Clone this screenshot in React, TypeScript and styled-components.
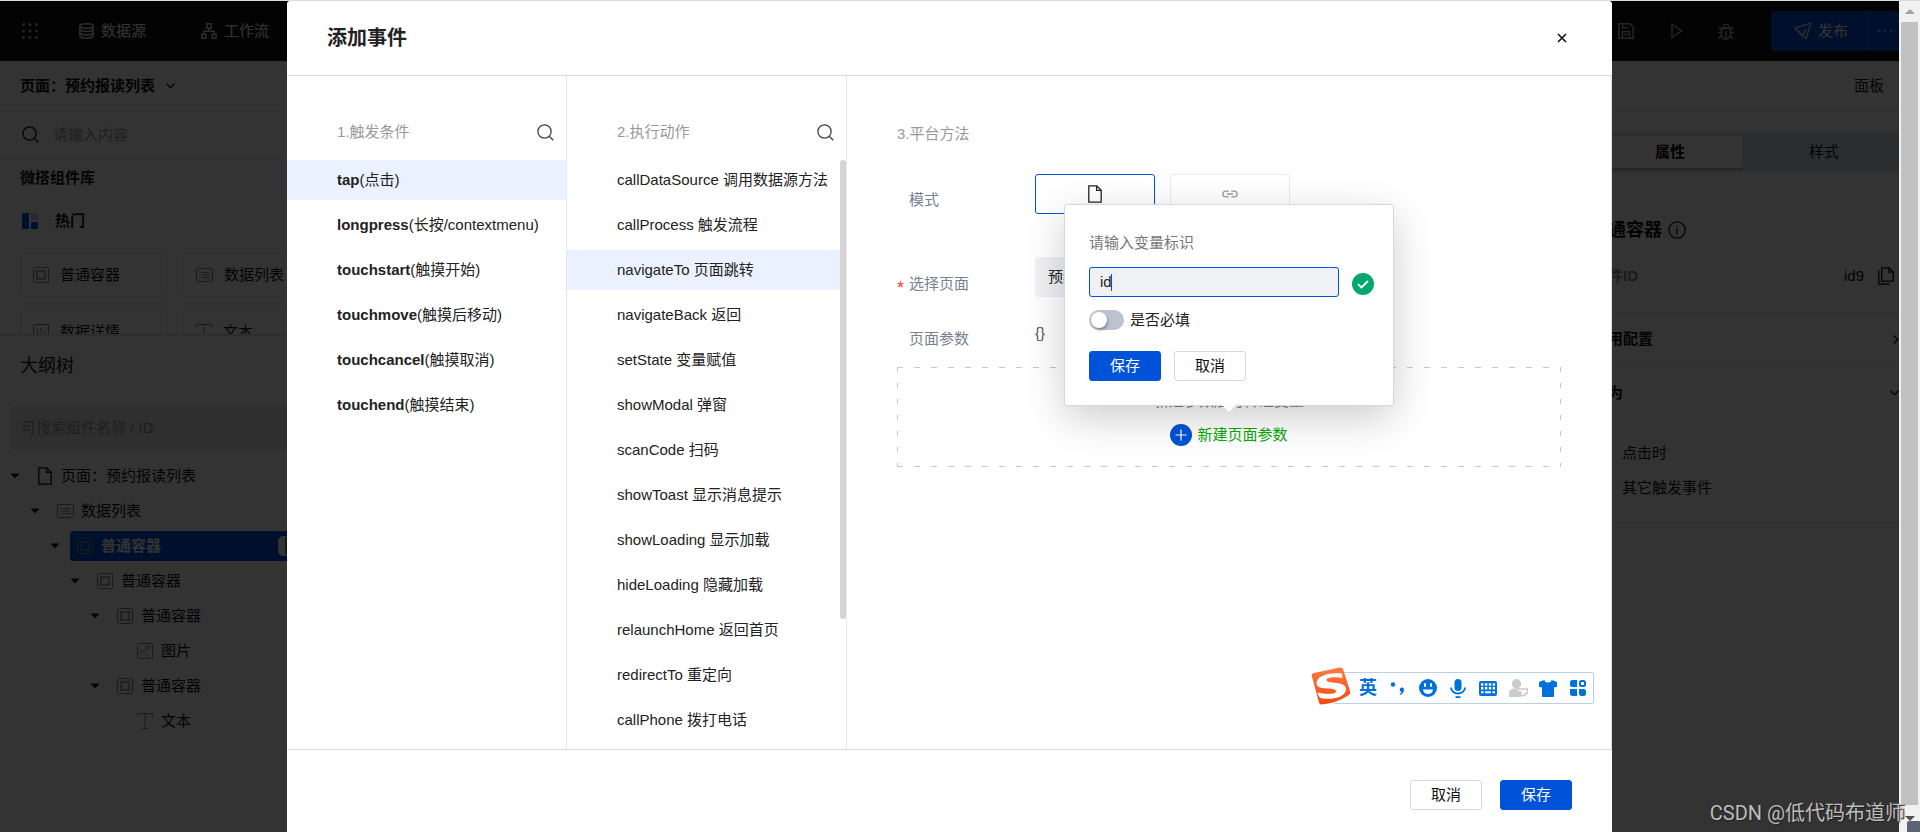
import React from 'react';
import styled, { createGlobalStyle, css } from 'styled-components';

const GlobalStyle = createGlobalStyle`
  *, *::before, *::after { box-sizing: border-box; }
  html, body { margin: 0; padding: 0; }
  body {
    font-family: "Liberation Sans", "Noto Sans CJK SC", sans-serif;
    font-size: 15px;
    line-height: 20px;
    color: #222;
    overflow: hidden;
  }
  button, input { font: inherit; color: inherit; }
  button { background: none; border: 0; padding: 0; cursor: pointer; }
  h1, h2, h3, p, ul { margin: 0; padding: 0; font-size: inherit; font-weight: inherit; }
  ul { list-style: none; }
  svg { display: block; flex: none; }
`;

/* ---------- frame ---------- */

const Screen = styled.div`
  position: relative;
  display: flex;
  height: 100vh;
  border-top: 1px solid #dcdcdc;
  overflow: hidden;
`;

const Viewport = styled.div`
  position: relative;
  flex: 1;
  min-width: 0;
  display: flex;
  flex-direction: column;
  background: #fff;
  overflow: hidden;
`;

const PageScroll = styled.div`
  width: 21px;
  flex: none;
  display: flex;
  flex-direction: column;
  align-items: center;
  background: #f1f1f1;
`;

const PageThumb = styled.div`
  width: 17px;
  flex: 1;
  background: #c1c1c1;
`;

const ScrollArrow = styled.div<{ $h: number }>`
  height: ${p => p.$h}px;
  width: 100%;
  display: flex;
  align-items: center;
  justify-content: center;
`;

/* ---------- editor behind the dialog ---------- */

const TopBar = styled.header`
  height: 60px;
  flex: none;
  display: flex;
  align-items: center;
  justify-content: space-between;
  padding-left: 22px;
  background: #111;
  color: #fff;
`;

const TopGroup = styled.nav`
  display: flex;
  align-items: center;
`;

const TopItem = styled.button<{ $gap?: number }>`
  display: flex;
  align-items: center;
  gap: 7px;
  margin-left: ${p => p.$gap ?? 0}px;
`;

const Publish = styled.div`
  display: flex;
  height: 40px;
  margin-left: 37px;
  background: #0052d9;
  border-radius: 4px 0 0 4px;
`;

const PublishMain = styled.button`
  width: 95px;
  display: flex;
  align-items: center;
  gap: 6px;
  padding-left: 23px;
`;

const PublishMore = styled.button`
  width: 33px;
  padding-left: 10px;
  border-left: 1px solid #2a6fe6;
`;

const Workspace = styled.div`
  flex: 1;
  min-height: 0;
  display: flex;
  justify-content: space-between;
`;

const LeftPanel = styled.aside`
  width: 340px;
  display: flex;
  flex-direction: column;
`;

const PageSelect = styled.button`
  height: 51px;
  flex: none;
  display: flex;
  align-items: center;
  gap: 11px;
  padding-left: 20px;
  font-weight: 700;
  color: #111;
  border-bottom: 1px solid #e8e8e8;
`;

const SearchRow = styled.label`
  height: 47px;
  flex: none;
  display: flex;
  align-items: center;
  gap: 14px;
  padding-left: 22px;
  border-bottom: 2px solid #e8e8e8;
`;

const PlainInput = styled.input`
  width: 200px;
  padding: 0;
  border: 0;
  outline: 0;
  background: transparent;
  &::placeholder { color: #999; opacity: 1; }
`;

const Library = styled.section`
  height: 177px;
  flex: none;
  padding: 9px 0 0 20px;
  overflow: hidden;
  border-bottom: 2px solid #e4e4e4;
`;

const GroupTitle = styled.h2`
  font-weight: 700;
  color: #111;
`;

const HotTitle = styled.h3`
  display: flex;
  align-items: center;
  gap: 17px;
  margin: 23px 0 21px;
  padding-left: 2px;
  font-weight: 700;
  color: #111;
`;

const CardGrid = styled.div`
  display: grid;
  grid-template-columns: 148px 148px;
  gap: 12px 15px;
`;

const Card = styled.button`
  height: 45px;
  display: flex;
  align-items: center;
  gap: 11px;
  padding-left: 12px;
  color: #111;
  border: 1px solid #e6e6e6;
  border-radius: 4px;
`;

const OutlineTitle = styled.h2`
  padding: 18px 20px 0;
  font-size: 18px;
  line-height: 24px;
  color: #111;
`;

const OutlineSearch = styled.label`
  height: 44px;
  flex: none;
  display: flex;
  align-items: center;
  margin: 28px 10px 11px;
  padding-left: 11px;
  border-radius: 4px;
  background: #eaeaea;
`;

const Tree = styled.ul`
  display: flex;
  flex-direction: column;
  gap: 5px;
`;

const TreeRow = styled.li<{ $level: number }>`
  height: 30px;
  display: flex;
  align-items: center;
  padding-left: ${p => 10 + p.$level * 20}px;
`;

const Toggle = styled.span`
  width: 20px;
  flex: none;
`;

const TreeIcon = styled.span`
  width: 16px;
  display: flex;
  justify-content: center;
`;

const TreeLabel = styled.div<{ $active?: boolean }>`
  flex: 1;
  height: 30px;
  display: flex;
  align-items: center;
  gap: 8px;
  padding-left: 7px;
  color: #111;
  ${p => p.$active && css`
    background: #0052d9;
    color: #fff;
    font-weight: 700;
    border-radius: 3px 0 0 3px;
  `}
`;

const Badge = styled.span`
  height: 20px;
  width: 40px;
  margin-left: auto;
  margin-right: 22px;
  border: 1px solid #fff;
  border-left-width: 7px;
  border-radius: 5px;
  background: #2ba471;
`;

const RightPanel = styled.aside`
  width: 326px;
  display: flex;
  flex-direction: column;
  color: #111;
`;

const BoardLink = styled.div`
  height: 51px;
  display: flex;
  align-items: center;
  justify-content: flex-end;
  padding-right: 15px;
  border-bottom: 1px solid #e0e0e0;
`;

const Tabs = styled.div`
  display: grid;
  grid-template-columns: 146px 1fr;
  gap: 6px;
  height: 40px;
  margin: 20px 0 0 20px;
  padding: 4px 0 4px 4px;
  background: #dde0e5;
  border-radius: 4px;
`;

const Tab = styled.button<{ $active?: boolean }>`
  border-radius: 3px;
  ${p => p.$active && css`
    background: #fff;
    color: #000;
    font-weight: 700;
    box-shadow: 0 1px 2px rgba(0, 0, 0, 0.3);
  `}
`;

const WidgetTitle = styled.h2`
  display: flex;
  align-items: center;
  gap: 6px;
  margin: 46px 0 24px 17px;
  font-size: 18px;
  line-height: 24px;
  font-weight: 700;
`;

const Field = styled.div`
  height: 47px;
  display: flex;
  align-items: flex-start;
  justify-content: space-between;
  padding: 0 5px 0 20px;
  border-bottom: 1px solid #e0e0e0;
`;

const FieldName = styled.span`
  font-weight: 700;
  color: #888;
`;

const FieldValue = styled.span`
  display: flex;
  align-items: center;
  gap: 14px;
`;

const Section = styled.button<{ $line?: boolean }>`
  height: 53px;
  display: flex;
  align-items: center;
  justify-content: space-between;
  padding-left: 20px;
  font-weight: 700;
  color: #111;
  border-bottom: ${p => (p.$line ? '1px solid #e0e0e0' : '0')};
`;

const EventList = styled.ul`
  display: flex;
  flex-direction: column;
  gap: 15px;
  padding: 24px 0 25px 49px;
  border-bottom: 1px solid #e0e0e0;
`;

/* ---------- dialog ---------- */

const Overlay = styled.div`
  position: absolute;
  inset: 0;
  display: flex;
  padding: 0 287px;
  background: rgba(0, 0, 0, 0.8);
`;

const Dialog = styled.section`
  flex: 1;
  min-width: 0;
  display: flex;
  flex-direction: column;
  background: #fff;
  border-radius: 3px 3px 0 0;
`;

const DialogHead = styled.header`
  height: 75px;
  flex: none;
  display: flex;
  align-items: center;
  justify-content: space-between;
  padding: 0 45px 0 40px;
  border-bottom: 1px solid #d9dce6;
`;

const DialogTitle = styled.h1`
  font-size: 20px;
  line-height: 28px;
  font-weight: 700;
`;

const DialogBody = styled.div`
  flex: 1;
  min-height: 0;
  display: flex;
  border-right: 1px solid #dcdfe8;
`;

const Column = styled.div`
  width: 280px;
  flex: none;
  display: flex;
  flex-direction: column;
  border-right: 1px solid #e3e6ee;
`;

const ColumnHead = styled.div`
  display: flex;
  align-items: center;
  justify-content: space-between;
  margin: 46px 12px 18px 50px;
  color: #999;
`;

const ColumnBody = styled.div`
  flex: 1;
  min-height: 0;
  display: flex;
`;

const OptionList = styled.ul`
  flex: 1;
  overflow: hidden;
`;

const ListThumb = styled.div`
  width: 6px;
  height: 78%;
  border-radius: 3px;
  background: #d4d4d4;
`;

const Option = styled.li<{ $active?: boolean }>`
  height: 40px;
  margin-bottom: 5px;
  padding: 10px 0 10px 50px;
  white-space: nowrap;
  background: ${p => (p.$active ? '#ebf2ff' : 'transparent')};
`;

const Detail = styled.div`
  flex: 1;
  min-width: 0;
  padding: 48px 50px 0;
`;

const DetailTitle = styled.h2`
  margin-bottom: 30px;
  color: #999;
`;

const FormRow = styled.div<{ $h: number; $label: number }>`
  height: ${p => p.$h}px;
  display: flex;
  align-items: flex-start;
  & > :first-child { padding-top: ${p => p.$label}px; }
`;

const Label = styled.span`
  width: 138px;
  flex: none;
  display: flex;
  color: #79808f;
`;

const Star = styled.span`
  width: 12px;
  height: 20px;
  font-size: 18px;
  line-height: 28px;
  color: #f53f3f;
`;

const ModeGroup = styled.div`
  display: flex;
  gap: 15px;
`;

const ModeButton = styled.button<{ $active?: boolean }>`
  width: 120px;
  height: 40px;
  display: flex;
  align-items: center;
  justify-content: center;
  color: ${p => (p.$active ? '#222' : '#999')};
  border: 1px solid ${p => (p.$active ? '#0052d9' : '#e9ebf0')};
  border-radius: 3px;
`;

const PageField = styled.button`
  width: 350px;
  height: 40px;
  padding-left: 13px;
  text-align: left;
  background: #f0f1f5;
  border-radius: 3px;
`;

const ParamValue = styled.span`
  color: #555;
`;

const ParamBox = styled.div`
  height: 100px;
  display: flex;
  flex-direction: column;
  align-items: center;
  padding-top: 24px;
  color: #79808f;
  background:
    repeating-linear-gradient(90deg, #c8c8c8 0 6px, transparent 6px 17px) top / 100% 1px no-repeat,
    repeating-linear-gradient(90deg, #c8c8c8 0 6px, transparent 6px 17px) bottom / 100% 1px no-repeat,
    repeating-linear-gradient(180deg, #c8c8c8 0 5px, transparent 5px 16px) left / 1px 100% no-repeat,
    repeating-linear-gradient(180deg, #c8c8c8 0 5px, transparent 5px 16px) right / 1px 100% no-repeat;
`;

const ParamAnchor = styled.div`
  position: relative;
  margin-top: 13px;
`;

const AddParam = styled.button`
  display: flex;
  align-items: center;
  gap: 5px;
  color: #0aa80a;
`;

const Popover = styled.form`
  position: absolute;
  left: 50%;
  bottom: 40px;
  width: 330px;
  margin-left: -165px;
  padding: 28px 18px 24px 24px;
  color: #222;
  background: #fff;
  border: 1px solid #d5d8e2;
  border-radius: 3px;
  box-shadow: 0 12px 40px rgba(0, 0, 0, 0.2);
  &::after {
    content: "";
    position: absolute;
    left: 50%;
    top: 100%;
    margin-left: -7px;
    border: 7px solid transparent;
    border-bottom: 0;
    border-top-color: #fff;
  }
`;

const PopLabel = styled.label`
  display: block;
  color: #777;
`;

const InputRow = styled.div`
  display: flex;
  align-items: center;
  gap: 13px;
  margin: 14px 0 13px;
`;

const IdBox = styled.span`
  width: 250px;
  height: 30px;
  display: flex;
  align-items: center;
  padding-left: 10px;
  background: #f0f1f5;
  border: 1px solid #0052d9;
  border-radius: 3px;
`;

const IdInput = styled.input`
  width: 11px;
  padding: 0;
  border: 0;
  outline: 0;
  background: transparent;
`;

const Caret = styled.span`
  width: 1px;
  height: 17px;
  background: #0052d9;
`;

const ValidMark = styled.span`
  padding-top: 4px;
`;

const SwitchRow = styled.label`
  display: flex;
  align-items: center;
  gap: 6px;
  margin-bottom: 21px;
`;

const Switch = styled.input`
  appearance: none;
  width: 35px;
  height: 20px;
  margin: 0;
  padding: 2px;
  border-radius: 10px;
  background: #bcc3d0;
  &::before {
    content: "";
    display: block;
    width: 16px;
    height: 16px;
    border-radius: 8px;
    background: #fff;
    box-shadow: 1px 2px 3px rgba(0, 0, 0, 0.3);
  }
`;

const Actions = styled.div<{ $gap: number }>`
  display: flex;
  gap: ${p => p.$gap}px;
`;

const ActionButton = styled.button<{ $primary?: boolean }>`
  width: 72px;
  height: 30px;
  border: 1px solid ${p => (p.$primary ? '#0052d9' : '#d5d9e2')};
  border-radius: 3px;
  background: ${p => (p.$primary ? '#0052d9' : '#fff')};
  color: ${p => (p.$primary ? '#fff' : '#111')};
`;

const DialogFoot = styled.footer`
  height: 83px;
  flex: none;
  display: flex;
  justify-content: flex-end;
  padding: 30px 40px 0;
  border-top: 1px solid #d5d9e2;
`;

/* ---------- floating input-method bar and watermark ---------- */

const ImeBar = styled.div`
  position: absolute;
  right: 326px;
  bottom: 128px;
  height: 32px;
  display: flex;
  align-items: center;
  padding-left: 19px;
  color: #0071dc;
  background: #fff;
  border: 1px solid #b9cfe6;
  border-radius: 2px;
`;

const ImeLogo = styled.span`
  position: absolute;
  left: -23px;
  top: -6px;
`;

const ImeCell = styled.span`
  width: 30px;
  display: flex;
  justify-content: center;
  font-size: 18px;
  font-weight: 700;
`;

const Watermark = styled.div`
  position: absolute;
  right: 15px;
  bottom: 5px;
  font-family: Roboto, "Noto Sans CJK SC", sans-serif;
  font-size: 20px;
  line-height: 28px;
  color: #bdbdbd;
  text-shadow: 1px 1px 1px #222;
`;

const CornerBox = styled.div`
  position: absolute;
  right: 0;
  bottom: 0;
  width: 13px;
  height: 11px;
  border-radius: 2px 0 0 0;
  background: #5c6274;
`;

/* ---------- icons ---------- */

const stroke = { fill: 'none', stroke: 'currentColor', strokeWidth: 1.3 };

const SearchIcon = ({ color = '#444' }: { color?: string }) => (
  <svg width="17" height="17" viewBox="0 0 17 17" fill="none" stroke={color} strokeWidth="1.3">
    <circle cx="7.5" cy="7.5" r="6.6" />
    <path d="M12.2 12.2 16.3 16.3" />
  </svg>
);

const ChevronDown = () => (
  <svg width="9" height="6" viewBox="0 0 9 6" {...stroke}><path d="M.5.7 4.5 4.7 8.5.7" /></svg>
);

const ChevronRight = () => (
  <svg width="6" height="9" viewBox="0 0 6 9" {...stroke}><path d="M.7.5 4.7 4.5.7 8.5" /></svg>
);

const Triangle = () => (
  <svg width="10" height="6" viewBox="0 0 10 6"><path d="M.5.5h9L5 5.5z" fill="#111" /></svg>
);

const BoxIcon = () => (
  <svg width="16" height="16" viewBox="0 0 16 16" fill="none" stroke="#79808f">
    <rect x=".5" y=".5" width="15" height="15" rx="1" /><rect x="4" y="4" width="8" height="8" strokeWidth="1.3" />
  </svg>
);

const ListIcon = () => (
  <svg width="17" height="14" viewBox="0 0 17 14" fill="none" stroke="#79808f">
    <rect x=".5" y=".5" width="16" height="13" rx="1" />
    <path d="M3.5 4.5h1.2M6 4.5h7.5M3.5 7h1.2M6 7h7.5M3.5 9.5h1.2M6 9.5h7.5" />
  </svg>
);

const ChartIcon = () => (
  <svg width="16" height="16" viewBox="0 0 16 16" fill="none" stroke="#79808f">
    <rect x=".5" y=".5" width="15" height="15" rx="1" /><path d="M4.5 6v8M8 3.5V14M11.5 7v7" />
  </svg>
);

const TextIcon = () => (
  <svg width="16" height="16" viewBox="0 0 16 16" fill="none" stroke="#79808f">
    <path d="M.5 3.5v-3h15v3M8 .5v15M5 15.5h6" />
  </svg>
);

const ImageIcon = () => (
  <svg width="16" height="16" viewBox="0 0 16 16" fill="none" stroke="#79808f">
    <rect x=".5" y=".5" width="15" height="15" rx="1" /><circle cx="10.5" cy="5" r="2" />
    <path d="M.8 12 5.5 7.5 13 15.2" />
  </svg>
);

const FileIcon = () => (
  <svg width="14" height="18" viewBox="0 0 14 18" {...stroke}>
    <path d="M.8.8h8l4.4 4.4v12H.8zM8.6.8v4.6h4.6" />
  </svg>
);

const CopyIcon = () => (
  <svg width="16" height="18" viewBox="0 0 16 18" {...stroke}>
    <path d="M3.7.8h7.5l4 4v9.4H3.7zM10.8.8v4.4h4.4M.8 3.5v13.7h11" />
  </svg>
);

const LinkIcon = () => (
  <svg width="16" height="8" viewBox="0 0 16 8" {...stroke}>
    <path d="M6.7 6.9H3.8A2.9 2.9 0 0 1 3.8 1.1h2.9M9.3 1.1h2.9a2.9 2.9 0 0 1 0 5.8H9.3M5 4h6" />
  </svg>
);

const AppsIcon = () => (
  <svg width="16" height="16" viewBox="0 0 16 16" fill="#bbb">
    {[1.5, 8, 14.5].map(y => [1.5, 8, 14.5].map(x => <circle key={`${x}-${y}`} cx={x} cy={y} r="1.4" />))}
  </svg>
);

const DataIcon = () => (
  <svg width="15" height="16" viewBox="0 0 15 16" fill="none" stroke="#ddd" strokeWidth="1.6">
    <ellipse cx="7.5" cy="3" rx="6.6" ry="2.2" />
    <path d="M.9 3v10c0 1.2 3 2.2 6.6 2.2s6.6-1 6.6-2.2V3M.9 6.3c0 1.2 3 2.2 6.6 2.2s6.6-1 6.6-2.2M.9 9.7c0 1.2 3 2.2 6.6 2.2s6.6-1 6.6-2.2" />
  </svg>
);

const FlowIcon = () => (
  <svg width="16" height="16" viewBox="0 0 16 16" fill="none" stroke="#ddd" strokeWidth="1.5">
    <path d="M5.8.8h4.4v4.4H5.8zM.8 11.2h4v4h-4zM11.2 11.2h4v4h-4zM8 5.2v3M2.8 11V8.2h10.4V11" />
  </svg>
);

const SaveIcon = () => (
  <svg width="16" height="16" viewBox="0 0 16 16" fill="none" stroke="#bbb" strokeWidth="1.5">
    <path d="M.8.8h11l3.4 3.4v11H.8zM4.5 15V8.5h7V15M4.5.8v4h6M6 11.5h4" />
  </svg>
);

const PlayIcon = () => (
  <svg width="12" height="16" viewBox="0 0 12 16" fill="none" stroke="#bbb" strokeWidth="1.4">
    <path d="M1 1.5v13L10.5 8z" />
  </svg>
);

const BugIcon = () => (
  <svg width="16" height="17" viewBox="0 0 16 17" fill="none" stroke="#bbb" strokeWidth="1.4">
    <path d="M4.8 5a3.2 3.8 0 0 1 6.4 0zM3.5 5.5h9v6a4.5 4.5 0 0 1-9 0zM8 8v8M0 9.5h3.5M12.5 9.5H16M3.5 6.5.8 4M12.5 6.5 15.2 4M3.8 12.5 1 15.5M12.2 12.5 15 15.5" />
  </svg>
);

const SendIcon = () => (
  <svg width="18" height="18" viewBox="0 0 18 18" fill="none" stroke="#ddd" strokeWidth="1.4">
    <path d="M1 6.2 16.8 1 12.2 16.6 5.6 11zM5.6 11 9.2 12.8 11.8 7.2M5.6 11 4.8 8.6" />
  </svg>
);

const DotsIcon = () => (
  <svg width="16" height="4" viewBox="0 0 16 4" fill="#8fb3ee">
    <circle cx="2" cy="2" r="1.2" /><circle cx="8" cy="2" r="1.2" /><circle cx="14" cy="2" r="1.2" />
  </svg>
);

const HotIcon = () => (
  <svg width="16" height="16" viewBox="0 0 16 16">
    <rect width="7" height="16" rx="1" fill="#0052d9" />
    <rect x="9" width="7" height="7" rx="1" fill="#c3cbe0" />
    <rect x="9" y="9" width="7" height="7" rx="1" fill="#0052d9" />
  </svg>
);

const InfoIcon = () => (
  <svg width="18" height="18" viewBox="0 0 18 18" {...stroke}>
    <circle cx="9" cy="9" r="8.2" /><path d="M9 7.5v6M9 4.5v1.5" />
  </svg>
);

const CloseIcon = () => (
  <svg width="10" height="10" viewBox="0 0 10 10" fill="none" stroke="#111" strokeWidth="1.6">
    <path d="M1 1 9 9M9 1 1 9" />
  </svg>
);

const PlusIcon = () => (
  <svg width="22" height="22" viewBox="0 0 22 22">
    <circle cx="11" cy="11" r="11" fill="#0052d9" />
    <path d="M11 5.5v11M5.5 11h11" stroke="#fff" strokeWidth="1.2" />
  </svg>
);

const CheckIcon = () => (
  <svg width="22" height="22" viewBox="0 0 22 22">
    <circle cx="11" cy="11" r="11" fill="#00a870" />
    <path d="M6 11.2 9.5 14.5 16 8" stroke="#fff" strokeWidth="1.8" fill="none" />
  </svg>
);

const SogouLogo = () => (
  <svg width="40" height="38" viewBox="0 0 40 38">
    <defs>
      <linearGradient id="sogou" x1="0" y1="0" x2="0" y2="1">
        <stop offset="0" stopColor="#ff7a45" /><stop offset="1" stopColor="#f04a10" />
      </linearGradient>
    </defs>
    <path d="M3 6 29 .6Q31.5 0 32.2 2.5L39 24Q39.8 27 37 28.5 25 36.5 10.5 37.4 8.5 37.5 8 35.5L.8 9Q.2 6.6 3 6z" fill="url(#sogou)" />
    <path d="M31 6.5C20 5 5.5 8 5.5 16c0 8.500 19 3.500 19.500 8 .3 3.500-10 3.500-18.500 1.500.5 2.500 1.500 4.500 3 5.500C20 33.500 35 30.500 35 22c0-8.500-19.500-4.500-19.500-9 0-3 8-3.500 16-2z" fill="#fff" />
  </svg>
);

const PunctIcon = () => (
  <svg width="16" height="16" viewBox="0 0 16 16" fill="#0071dc">
    <circle cx="3" cy="4.5" r="2.2" /><path d="M11.5 7.5a2.2 2.2 0 0 1 2.5 2.3c0 2.5-1.6 4.4-4 5.2l-.4-1c1.2-.6 1.8-1.4 1.9-2.2a2.2 2.2 0 0 1 0-4.3z" />
  </svg>
);

const SmileIcon = () => (
  <svg width="18" height="18" viewBox="0 0 18 18">
    <circle cx="9" cy="9" r="9" fill="#0071dc" />
    <rect x="5" y="4" width="2" height="4" rx="1" fill="#fff" /><rect x="11" y="4" width="2" height="4" rx="1" fill="#fff" />
    <path d="M4 10.5h10a5 4.5 0 0 1-10 0z" fill="#fff" />
  </svg>
);

const MicIcon = () => (
  <svg width="16" height="19" viewBox="0 0 16 19">
    <rect x="4.5" width="7" height="12" rx="3.5" fill="#0071dc" />
    <path d="M1 8.5a7 6 0 0 0 14 0" fill="none" stroke="#0071dc" strokeWidth="1.8" />
    <path d="M5.5 17.2h5v1.8h-5z" fill="#0071dc" />
  </svg>
);

const KeyboardIcon = () => (
  <svg width="18" height="15" viewBox="0 0 18 15">
    <rect width="18" height="15" rx="2" fill="#0071dc" />
    <path d="M2 3.5h14M2 7.2h14" stroke="#fff" strokeWidth="2.4" strokeDasharray="2.4 1.5" />
    <path d="M2 11.3h2.5M6 11.3h6M13.5 11.3H16" stroke="#fff" strokeWidth="2" />
  </svg>
);

const UserIcon = () => (
  <svg width="19" height="18" viewBox="0 0 19 18">
    <circle cx="7.5" cy="4.7" r="4.7" fill="#ccc" />
    <path d="M0 18v-4c0-3 2.5-4.5 5-4.5h7V18z" fill="#ccc" />
    <path d="M8.5 10h10v4.5H16v2h-4v-3.5H8.5z" fill="#fff" stroke="#ccc" strokeWidth="1.5" />
  </svg>
);

const ShirtIcon = () => (
  <svg width="18" height="17" viewBox="0 0 18 17">
    <path d="M5.5 0a3.5 2.5 0 0 0 7 0L17 1.5c.8.3 1 1 1 1.8v3c0 .6-.5.9-1 .9h-2V16c0 .6-.4 1-1 1H4c-.6 0-1-.4-1-1V7.2H1c-.5 0-1-.3-1-.9v-3C0 2.5.2 1.8 1 1.5z" fill="#0071dc" />
  </svg>
);

const GridIcon = () => (
  <svg width="16" height="16" viewBox="0 0 16 16" fill="#0071dc">
    <path d="M2.5 0H7v7H2.5A2.5 2.5 0 0 1 0 4.5v-2A2.5 2.5 0 0 1 2.5 0zM0 9h7v7H2.5A2.5 2.5 0 0 1 0 13.5zM9 9h4.5A2.5 2.5 0 0 1 16 11.5v2a2.5 2.5 0 0 1-2.5 2.5h-2A2.5 2.5 0 0 1 9 13.5z" />
    <rect x="10" y="1" width="5" height="5" rx="1.5" fill="none" stroke="#0071dc" strokeWidth="2" />
  </svg>
);

/* ---------- data ---------- */

const tree = [
  { level: 0, icon: <FileIcon />, name: '页面：预约报读列表', open: true },
  { level: 1, icon: <ListIcon />, name: '数据列表', open: true },
  { level: 2, icon: <BoxIcon />, name: '普通容器', open: true, active: true },
  { level: 3, icon: <BoxIcon />, name: '普通容器', open: true },
  { level: 4, icon: <BoxIcon />, name: '普通容器', open: true },
  { level: 5, icon: <ImageIcon />, name: '图片', open: false },
  { level: 4, icon: <BoxIcon />, name: '普通容器', open: true },
  { level: 5, icon: <TextIcon />, name: '文本', open: false },
];

const triggers = [
  ['tap', '(点击)'],
  ['longpress', '(长按/contextmenu)'],
  ['touchstart', '(触摸开始)'],
  ['touchmove', '(触摸后移动)'],
  ['touchcancel', '(触摸取消)'],
  ['touchend', '(触摸结束)'],
];

const actions = [
  'callDataSource 调用数据源方法',
  'callProcess 触发流程',
  'navigateTo 页面跳转',
  'navigateBack 返回',
  'setState 变量赋值',
  'showModal 弹窗',
  'scanCode 扫码',
  'showToast 显示消息提示',
  'showLoading 显示加载',
  'hideLoading 隐藏加载',
  'relaunchHome 返回首页',
  'redirectTo 重定向',
  'callPhone 拨打电话',
];

/* ---------- page ---------- */

const Editor = () => (
  <>
    <TopBar>
      <TopGroup>
        <TopItem aria-label="应用"><AppsIcon /></TopItem>
        <TopItem $gap={41}><DataIcon />数据源</TopItem>
        <TopItem $gap={55}><FlowIcon />工作流</TopItem>
      </TopGroup>
      <TopGroup>
        <TopItem aria-label="保存"><SaveIcon /></TopItem>
        <TopItem $gap={37} aria-label="预览"><PlayIcon /></TopItem>
        <TopItem $gap={35} aria-label="调试"><BugIcon /></TopItem>
        <Publish>
          <PublishMain><SendIcon />发布</PublishMain>
          <PublishMore aria-label="更多"><DotsIcon /></PublishMore>
        </Publish>
      </TopGroup>
    </TopBar>
    <Workspace>
      <LeftPanel>
        <PageSelect>页面：预约报读列表<ChevronDown /></PageSelect>
        <SearchRow><SearchIcon color="#111" /><PlainInput placeholder="请输入内容" /></SearchRow>
        <Library>
          <GroupTitle>微搭组件库</GroupTitle>
          <HotTitle><HotIcon />热门</HotTitle>
          <CardGrid>
            <Card><BoxIcon />普通容器</Card>
            <Card><ListIcon />数据列表</Card>
            <Card><ChartIcon />数据详情</Card>
            <Card><TextIcon />文本</Card>
          </CardGrid>
        </Library>
        <OutlineTitle>大纲树</OutlineTitle>
        <OutlineSearch><PlainInput placeholder="可搜索组件名称 / ID" /></OutlineSearch>
        <Tree>
          {tree.map((n, i) => (
            <TreeRow key={i} $level={n.level}>
              <Toggle>{n.open && <Triangle />}</Toggle>
              <TreeLabel $active={n.active}>
                <TreeIcon>{n.icon}</TreeIcon>
                {n.name}
                {n.active && <Badge />}
              </TreeLabel>
            </TreeRow>
          ))}
        </Tree>
      </LeftPanel>
      <RightPanel>
        <BoardLink>面板</BoardLink>
        <Tabs><Tab $active>属性</Tab><Tab>样式</Tab></Tabs>
        <WidgetTitle>普通容器<InfoIcon /></WidgetTitle>
        <Field>
          <FieldName>组件ID</FieldName>
          <FieldValue>id9<CopyIcon /></FieldValue>
        </Field>
        <Section $line>通用配置<ChevronRight /></Section>
        <Section>行为<ChevronDown /></Section>
        <EventList><li>点击时</li><li>其它触发事件</li></EventList>
      </RightPanel>
    </Workspace>
  </>
);

const VariablePopover = () => (
  <Popover onSubmit={e => e.preventDefault()}>
    <PopLabel htmlFor="variable-id">请输入变量标识</PopLabel>
    <InputRow>
      <IdBox><IdInput id="variable-id" defaultValue="id" /><Caret /></IdBox>
      <ValidMark><CheckIcon /></ValidMark>
    </InputRow>
    <SwitchRow><Switch type="checkbox" role="switch" />是否必填</SwitchRow>
    <Actions $gap={13}>
      <ActionButton $primary type="submit">保存</ActionButton>
      <ActionButton type="button">取消</ActionButton>
    </Actions>
  </Popover>
);

export default function App() {
  return (
    <>
      <GlobalStyle />
      <Screen>
        <Viewport>
          <Editor />
          <Overlay>
            <Dialog role="dialog" aria-labelledby="dialog-title">
              <DialogHead>
                <DialogTitle id="dialog-title">添加事件</DialogTitle>
                <button aria-label="关闭"><CloseIcon /></button>
              </DialogHead>
              <DialogBody>
                <Column>
                  <ColumnHead><h2>1.触发条件</h2><button aria-label="搜索"><SearchIcon /></button></ColumnHead>
                  <ColumnBody>
                    <OptionList>
                      {triggers.map(([name, note], i) => (
                        <Option key={name} $active={i === 0}><b>{name}</b>{note}</Option>
                      ))}
                    </OptionList>
                  </ColumnBody>
                </Column>
                <Column>
                  <ColumnHead><h2>2.执行动作</h2><button aria-label="搜索"><SearchIcon /></button></ColumnHead>
                  <ColumnBody>
                    <OptionList>
                      {actions.map((name, i) => <Option key={name} $active={i === 2}>{name}</Option>)}
                    </OptionList>
                    <ListThumb />
                  </ColumnBody>
                </Column>
                <Detail>
                  <DetailTitle>3.平台方法</DetailTitle>
                  <FormRow $h={83} $label={16}>
                    <Label><Star />模式</Label>
                    <ModeGroup>
                      <ModeButton $active aria-label="页面"><FileIcon /></ModeButton>
                      <ModeButton aria-label="链接"><LinkIcon /></ModeButton>
                    </ModeGroup>
                  </FormRow>
                  <FormRow $h={66} $label={17}>
                    <Label><Star>*</Star>选择页面</Label>
                    <PageField>预约报读列表</PageField>
                  </FormRow>
                  <FormRow $h={44} $label={6}>
                    <Label><Star />页面参数</Label>
                    <ParamValue>{'{}'}</ParamValue>
                  </FormRow>
                  <ParamBox>
                    <p>新建参数后可传递变量</p>
                    <ParamAnchor>
                      <AddParam><PlusIcon />新建页面参数</AddParam>
                      <VariablePopover />
                    </ParamAnchor>
                  </ParamBox>
                </Detail>
              </DialogBody>
              <DialogFoot>
                <Actions $gap={18}>
                  <ActionButton>取消</ActionButton>
                  <ActionButton $primary>保存</ActionButton>
                </Actions>
              </DialogFoot>
            </Dialog>
          </Overlay>
        </Viewport>
        <PageScroll>
          <ScrollArrow $h={21}>
            <svg width="10" height="5" viewBox="0 0 10 5"><path d="M0 5 5 0l5 5z" fill="#a3a3a3" /></svg>
          </ScrollArrow>
          <PageThumb />
          <ScrollArrow $h={27}>
            <svg width="10" height="5" viewBox="0 0 10 5"><path d="M0 0h10L5 5z" fill="#505050" /></svg>
          </ScrollArrow>
        </PageScroll>
        <CornerBox />
        <ImeBar>
          <ImeLogo><SogouLogo /></ImeLogo>
          <ImeCell>英</ImeCell>
          <ImeCell><PunctIcon /></ImeCell>
          <ImeCell><SmileIcon /></ImeCell>
          <ImeCell><MicIcon /></ImeCell>
          <ImeCell><KeyboardIcon /></ImeCell>
          <ImeCell><UserIcon /></ImeCell>
          <ImeCell><ShirtIcon /></ImeCell>
          <ImeCell><GridIcon /></ImeCell>
        </ImeBar>
        <Watermark>CSDN @低代码布道师</Watermark>
      </Screen>
    </>
  );
}
